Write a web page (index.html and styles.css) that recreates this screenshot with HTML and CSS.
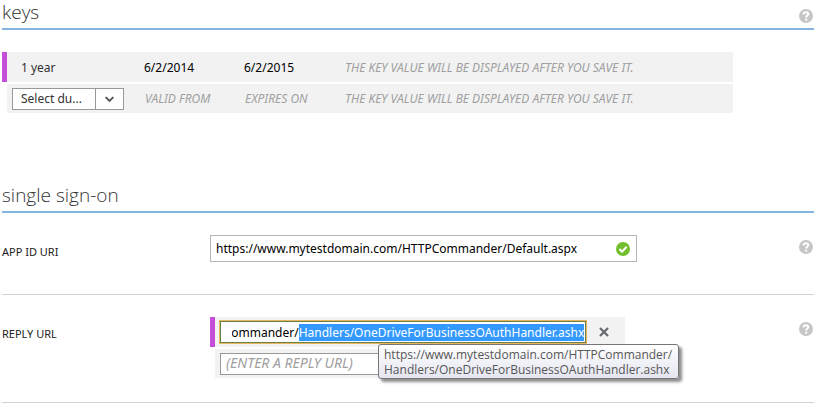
FILE: index.html
```html
<!DOCTYPE html>
<html lang="en">
<head>
<meta charset="utf-8">
<title>Configure</title>
<link rel="stylesheet" href="styles.css">
</head>
<body>
<svg class="defs" aria-hidden="true">
  <symbol id="help" viewBox="0 0 14 14">
    <circle cx="7" cy="7" r="7" fill="#c6c6c6"/>
    <path d="M4.6 5.4C4.6 3.7 5.7 3.2 7 3.2S9.3 3.9 9.3 5.1C9.3 6.6 7.2 6.6 7.2 8.6" fill="none" stroke="#fff" stroke-width="2"/>
    <rect x="6.2" y="9.6" width="2" height="2" fill="#fff"/>
  </symbol>
</svg>
<main class="page">
  <section class="section">
    <header class="section-head">
      <h2>keys</h2>
      <button class="help" type="button" aria-label="Help: keys"><svg><use href="#help"/></svg></button>
    </header>
    <table class="keys">
      <tbody>
        <tr class="changed">
          <td class="mark"></td>
          <td class="duration">1 year</td>
          <td class="date">6/2/2014</td>
          <td class="date">6/2/2015</td>
          <td class="hint">THE KEY VALUE WILL BE DISPLAYED AFTER YOU SAVE IT.</td>
        </tr>
        <tr>
          <td class="mark"></td>
          <td class="choice">
            <label class="picker">
              <select aria-label="Key duration"><option>Select du...</option></select>
              <svg viewBox="0 0 28 20"><path d="M10 8l4 4 4-4" fill="none" stroke="#555" stroke-width="2"/></svg>
            </label>
          </td>
          <td class="hint">VALID FROM</td>
          <td class="hint">EXPIRES ON</td>
          <td class="hint">THE KEY VALUE WILL BE DISPLAYED AFTER YOU SAVE IT.</td>
        </tr>
      </tbody>
    </table>
  </section>

  <section class="section">
    <header class="section-head">
      <h2>single sign-on</h2>
    </header>
    <div class="field">
      <label class="name" for="app-id">APP ID URI</label>
      <div class="valid-box">
        <input id="app-id" type="text" value="https://www.mytestdomain.com/HTTPCommander/Default.aspx">
        <svg viewBox="0 0 14 14"><circle cx="7" cy="7" r="7" fill="#72bf2b"/><path d="M3.4 7l2.6 2.7 4.7-5" fill="none" stroke="#fff" stroke-width="2"/></svg>
      </div>
      <button class="help" type="button" aria-label="Help: app ID URI"><svg><use href="#help"/></svg></button>
    </div>
    <div class="field">
      <label class="name" for="reply">REPLY URL</label>
      <div class="replies">
        <div class="reply changed">
          <input id="reply" class="active" type="text" value="https://www.mytestdomain.com/HTTPCommander/Handlers/OneDriveForBusinessOAuthHandler.ashx">
          <button class="remove" type="button" aria-label="Remove"><svg viewBox="0 0 10 10"><path d="M1 1l8 8M9 1l-8 8" stroke="#666b70" stroke-width="2.3"/></svg></button>
          <div class="tip" role="tooltip">https://www.mytestdomain.com/HTTPCommander/<br>Handlers/OneDriveForBusinessOAuthHandler.ashx</div>
        </div>
        <div class="reply">
          <input type="text" aria-label="New reply URL" placeholder="(ENTER A REPLY URL)">
        </div>
      </div>
      <button class="help" type="button" aria-label="Help: reply URL"><svg><use href="#help"/></svg></button>
    </div>
  </section>
</main>
<script src="script.js"></script>
</body>
</html>
```
FILE: styles.css
```css
* { box-sizing: border-box; }
body {
  margin: 0;
  background: #fff;
  color: #333;
  font: 12px/16px "Noto Sans", "Open Sans", sans-serif;
}
input, select, button { font: inherit; color: inherit; border-radius: 0; }
.defs { display: none; }
.page { padding: 0 2px; }
.section { margin-bottom: 70px; }
.section:last-child { margin: 0; }
.section-head {
  display: flex;
  justify-content: space-between;
  align-items: center;
  height: 30px;
  padding-bottom: 4px;
  border-bottom: 2px solid #85b5e1;
}
h2 { margin: 0; font: 300 19px/24px "Open Sans", sans-serif; }
.help {
  width: 16px;
  height: 14px;
  padding: 0 1px;
  border: 0;
  background: none;
}
.help svg { display: block; width: 14px; height: 14px; }
.section-head .help { margin-top: 8px; }

.keys {
  width: 90%;
  margin-top: 22px;
  border-spacing: 0;
  table-layout: fixed;
}
.keys tr { height: 29px; }
.keys .changed { height: 32px; }
.keys td {
  padding: 0;
  background: #f2f2f2 padding-box;
}
.keys .changed td { padding-top: 2px; border-bottom: 2px solid #fff; }
.keys .mark { width: 5px; background-color: #fff; }
.keys .changed .mark { background-color: #c64fd9; }
.keys .duration { width: 137px; padding-left: 14px; }
.keys .choice { padding-left: 5px; }
.keys .date { width: 100px; color: #000; }
.keys .hint { padding-left: 1px; color: #a0a0a0; font-style: italic; }
.picker {
  display: grid;
  grid-template-columns: 1fr 28px;
  width: 112px;
  height: 22px;
  border: 1px solid #999;
  background: #fff;
}
.picker select {
  grid-area: 1 / 1 / 2 / 3;
  appearance: none;
  width: 100%;
  padding: 0 28px 0 8px;
  border: 0;
  background: none;
}
.picker svg {
  grid-area: 1 / 2;
  width: 28px;
  height: 20px;
  border-left: 1px solid #999;
  pointer-events: none;
}

.field {
  display: grid;
  grid-template-columns: 208px 1fr 16px;
  align-items: start;
  padding: 22px 0 32px;
  border-bottom: 1px solid #d3d3d3;
}
.field + .field { padding-bottom: 24px; }
.name { padding-top: 9px; font-size: 11px; color: #222; }
.field .help { margin-top: 5px; }
.valid-box {
  display: flex;
  align-items: center;
  max-width: 427px;
  height: 27px;
  padding: 0 6px 0 5px;
  border: 1px solid #b5b5b5;
}
.valid-box input { flex: 1; min-width: 0; padding: 0; border: 0; color: #000; }
.valid-box svg { width: 14px; height: 14px; }
.replies { display: grid; gap: 2px; max-width: 415px; }
.reply {
  position: relative;
  display: flex;
  align-items: center;
  gap: 13px;
  height: 29px;
  margin-left: 5px;
  padding: 0 5px;
  background: #f2f2f2;
}
.reply.changed { height: 30px; margin-left: 0; border-left: 5px solid #c64fd9; }
.reply input {
  width: 366px;
  height: 22px;
  padding: 0 5px;
  border: 1px solid #999;
  background: #fff;
}
.reply input.active {
  padding: 0 1px 0 11px;
  border-color: #6b7f4b;
  outline: 1px solid #e9b660;
  color: #000;
}
.reply input::selection { background: #3399ff; color: #fff; }
.reply input::placeholder { color: #a0a0a0; font-size: 14px; font-style: italic; opacity: 1; }
.remove { width: 10px; height: 10px; padding: 0; border: 0; background: none; }
.remove svg { display: block; width: 10px; height: 10px; }
.tip {
  position: absolute;
  z-index: 1;
  top: 27px;
  left: 163px;
  padding: 2px 6px 1px 5px;
  border: 1px solid #767676;
  border-radius: 3px;
  background: linear-gradient(#fff, #e4e5f0);
  box-shadow: 3px 3px 3px rgba(0, 0, 0, .45);
  color: #575757;
  font-family: "Open Sans", sans-serif;
  line-height: 15px;
  white-space: nowrap;
}
```
FILE: script.js
```js
const reply = document.getElementById("reply");
reply.focus();
reply.setSelectionRange(reply.value.indexOf("Handlers/"), reply.value.length);
reply.scrollLeft = reply.scrollWidth;
```
